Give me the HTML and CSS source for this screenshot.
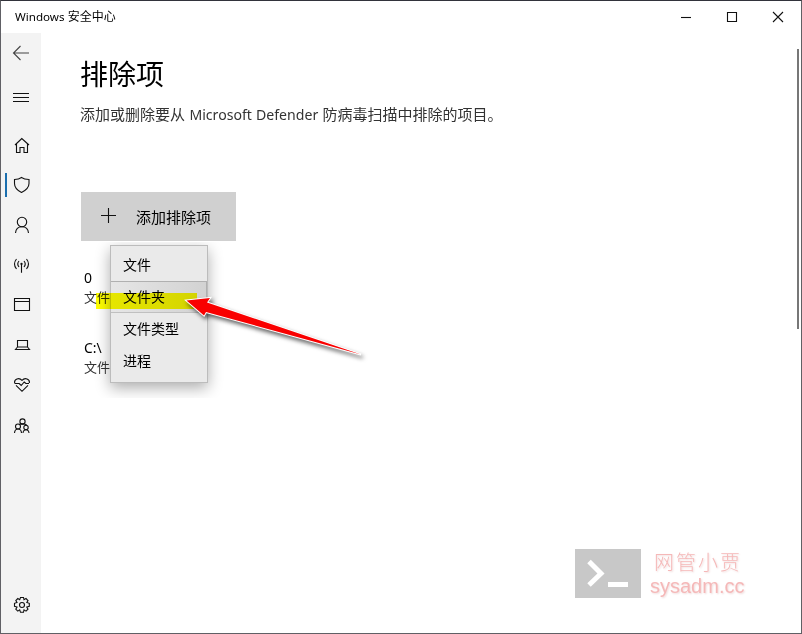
FILE: index.html
```html
<!DOCTYPE html>
<html lang="zh-CN">
<head>
<meta charset="utf-8">
<title>Windows 安全中心</title>
<link rel="stylesheet" href="styles.css">
</head>
<body>
<div class="window">
  <header class="titlebar">
    <span class="caption"><span class="latin">Windows</span> 安全中心</span>
    <div class="controls">
      <svg class="control" viewBox="0 0 46 32"><path d="M18 16.5h10"/></svg>
      <svg class="control" viewBox="0 0 46 32"><path d="M18.5 11.5h9v9h-9z"/></svg>
      <svg class="control" viewBox="0 0 46 32"><path d="M18 11l10 10M28 11l-10 10"/></svg>
    </div>
  </header>
  <div class="body">
    <nav class="sidebar">
      <svg class="nav back" viewBox="0 0 40 40"><path d="M12.500 20H28M19.500 13l-7 7 7 7"/></svg>
      <svg class="nav hamburger" viewBox="0 0 40 40"><path d="M12 16.500h16M12 20.500h16M12 24.500h16"/></svg>
      <svg class="nav" viewBox="0 0 40 40"><path d="M14 20L20.800 13.500 28 20M15.500 19V27.500h3.500v-5h4v5h3.500V19"/></svg>
      <div class="nav active"><svg viewBox="0 0 40 40"><path d="M20.500 12.500C18.500 14 16.500 14.500 13.500 14.500V18.500c0 4.500 3 7 7 9 4-2 7.500-4.500 7.500-9v-4c-3 0-5.500-.5-7.500-2z"/></svg></div>
      <svg class="nav" viewBox="0 0 40 40"><circle cx="21" cy="17" r="4.700"/><path d="M14.500 28c.3-4 3-6.300 6.500-6.300s6.200 2.300 6.500 6.300"/></svg>
      <svg class="nav" viewBox="0 0 40 40"><path d="M20.500 20v7.800M18 16q-2.500 3 0 6M23 16q2.500 3 0 6M15.500 14q-4 5 0 10M25.500 14q4 5 0 10"/><circle cx="20.500" cy="19" r=".6"/></svg>
      <svg class="nav" viewBox="0 0 40 40"><path d="M13.500 13.500h15v12h-15zM13.500 16.500h15"/></svg>
      <svg class="nav" viewBox="0 0 40 40"><path d="M16.500 15.500h10v6.500h-10zM16.500 22l-2 2.500h14l-2-2.500"/></svg>
      <svg class="nav" viewBox="0 0 40 40"><path d="M13.600 18c-.6-4 4.400-6 7.400-2.700 3-3.300 8-1.300 7.400 2.700M15 20.300l6 6 6-6M13.500 18.500h4.700l2 2 3-3.500 1.700 1.500H28"/></svg>
      <svg class="nav people" viewBox="0 0 40 40"><circle cx="21.500" cy="15.500" r="2.600"/><circle cx="17" cy="20.500" r="2.500"/><circle cx="25" cy="21.500" r="2.200"/><path d="M18 18.500q1-.6 3.500-.6 3.500 0 4 1.500M13.500 27q.3-4 3.500-4T20.500 27M22 27q.3-3.300 3-3.300t3 3.300"/></svg>
      <svg class="nav settings" viewBox="0 0 40 40"><circle cx="21" cy="20" r="2.500"/><path d="M19.500 12.500h3l.5 2.200 2-1.200 2 2-1.200 2 2.500.8v3l-2.500.8 1.200 2-2 2-2-1.200-.5 2.400h-3l-.8-2.400-1.900 1.200-2-2 1.200-2-2.500-.8v-3l2.500-.8-1.200-2 2-2 1.900 1.200z"/></svg>
    </nav>
    <main class="content">
      <h1>排除项</h1>
      <p class="intro">添加或删除要从 <span class="latin">Microsoft Defender</span> 防病毒扫描中排除的项目。</p>
      <section class="exclusions">
        <button class="add"><svg viewBox="0 0 16 16"><path d="M0 7.500h15M7.500 0v15"/></svg><span>添加排除项</span></button>
        <div class="list">
          <div class="entry"><div class="name">0</div><div class="kind">文件夹</div></div>
          <div class="entry"><div class="name">C:\</div><div class="kind">文件夹</div></div>
        </div>
        <div class="flyout">
          <ul class="menu">
            <li>文件</li>
            <li class="selected">文件夹</li>
            <li>文件类型</li>
            <li>进程</li>
          </ul>
        </div>
        <div class="marker"></div>
        <svg class="arrow" viewBox="0 0 200 80"><path class="outline" d="M6.500 10.500L30 8l-3 4.500L181 64.500 26 22 24 25.500z"/><path class="fill" d="M6.500 10.500L30 8l-3 4.500L181 64.500 26 22 24 25.500z"/></svg>
      </section>
    </main>
  </div>
  <div class="scrollbar"></div>
  <div class="watermark">
    <svg viewBox="0 0 66 49"><path class="plate" d="M0 0h66v49H0z"/><path class="prompt" d="M14 12.500l12 12-12 11.500M33 35.500h20"/></svg>
    <div class="brand"><div class="brand-name">网管小贾</div><div class="brand-site">sysadm.cc</div></div>
  </div>
</div>
</body>
</html>
```
FILE: styles.css
```css
* { box-sizing: border-box; }
body {
  margin: 0;
  font-family: "Noto Sans", "Noto Sans CJK SC", sans-serif;
  font-weight: 400;
  color: #000;
}
.window {
  position: relative;
  width: 802px;
  height: 634px;
  overflow: hidden;
  display: flex;
  flex-direction: column;
  background: #fff;
  border: 1px solid #606065;
  border-top-color: #32333b;
}
svg { display: block; fill: none; stroke: #111; stroke-width: 1.1; }
.titlebar {
  height: 32px;
  flex: none;
  display: flex;
  justify-content: space-between;
  align-items: center;
  padding-left: 14px;
}
.caption { font-size: 12px; line-height: 34px; white-space: nowrap; }
.caption .latin { font-size: 11.6px; }
.controls { display: flex; }
.control { width: 46px; height: 32px; }
.body { display: flex; flex: 1; min-height: 0; }
.sidebar {
  width: 40px;
  flex: none;
  display: flex;
  flex-direction: column;
  background: #f3f3f3;
}
.nav { width: 40px; height: 40px; flex: none; }
.back { stroke: #444; }
.hamburger { margin: 4px 0 8px; }
.people { margin-top: 1px; }
.settings { margin-top: auto; margin-bottom: 8px; }
.active { display: flex; align-items: center; }
.active::before { content: ""; width: 2px; height: 24px; margin-left: 4px; background: #1b6eae; }
.active svg { width: 40px; height: 40px; margin-left: -6px; }
.content { flex: 1; padding: 20px 0 0 39px; }
h1 { margin: 0; font-size: 28px; line-height: 42px; font-weight: 400; }
.intro { margin: 8px 0 0; font-size: 15px; line-height: 22px; color: #333; white-space: nowrap; }
.intro .latin { font-size: 14.1px; }
.intro { word-spacing: .5px; }
.exclusions {
  position: relative;
  width: 330px;
  margin: 66px 0 0 1px;
}
.add {
  width: 155px;
  height: 49px;
  display: flex;
  align-items: center;
  gap: 19px;
  padding: 0 0 1px 20px;
  border: 0;
  background: #d0d0d0;
  font: inherit;
  font-size: 15px;
  color: #000;
  white-space: nowrap;
}
.add svg { width: 16px; height: 16px; margin-top: -1px; }
.list { padding: 27px 0 0 3px; }
.entry { height: 70px; }
.name { font-size: 14px; line-height: 20px; }
.kind { font-size: 13px; line-height: 19px; color: #333; }
.flyout {
  position: absolute;
  left: 5px;
  top: 50px;
  width: 138px;
  height: 156px;
  padding: 3px 0 0 24px;
  overflow: hidden;
}
.menu {
  width: 98px;
  height: 138px;
  margin: 0;
  padding: 3px 0;
  list-style: none;
  background: #eaeaea;
  border: 1px solid #bcbcbc;
  box-shadow: 0 5px 14px rgba(0, 0, 0, .32);
  font-size: 14px;
}
.menu li { height: 32px; line-height: 32px; padding-left: 12px; }
.menu .selected {
  background: linear-gradient(90deg, #e6e6e6, #d2d2d2);
  box-shadow: inset -1px 1px #b0b0b0, inset 0 -1px #c0c0c0;
}
.marker {
  position: absolute;
  left: 15px;
  top: 101px;
  width: 101px;
  height: 16px;
  background: #ffff00;
  mix-blend-mode: multiply;
}
.arrow {
  position: absolute;
  left: 99px;
  top: 98px;
  width: 200px;
  height: 80px;
  filter: drop-shadow(2px 3px 2px rgba(0, 0, 0, .6));
}
.arrow .outline { stroke: #fff; stroke-width: 2; }
.arrow .fill { fill: #f90000; stroke: none; }
.scrollbar {
  position: absolute;
  right: 2px;
  top: 48px;
  width: 2px;
  height: 280px;
  background: #777;
}
.watermark {
  position: absolute;
  left: 574px;
  top: 548px;
  display: flex;
  gap: 9px;
}
.watermark svg { width: 66px; height: 49px; stroke: none; }
.plate { fill: #c8c8c8; }
.watermark .prompt { stroke: #fff; stroke-width: 5; }
.brand { color: #f5b8b8; text-shadow: 1px 1px 2px #eedada; white-space: nowrap; }
.brand-name { padding-left: 4px; font-family: "Noto Sans CJK SC", sans-serif; font-weight: 300; font-size: 20px; letter-spacing: 2px; line-height: 26px; }
.brand-site { font-family: "Liberation Sans", sans-serif; font-size: 20px; line-height: 23px; }
```
